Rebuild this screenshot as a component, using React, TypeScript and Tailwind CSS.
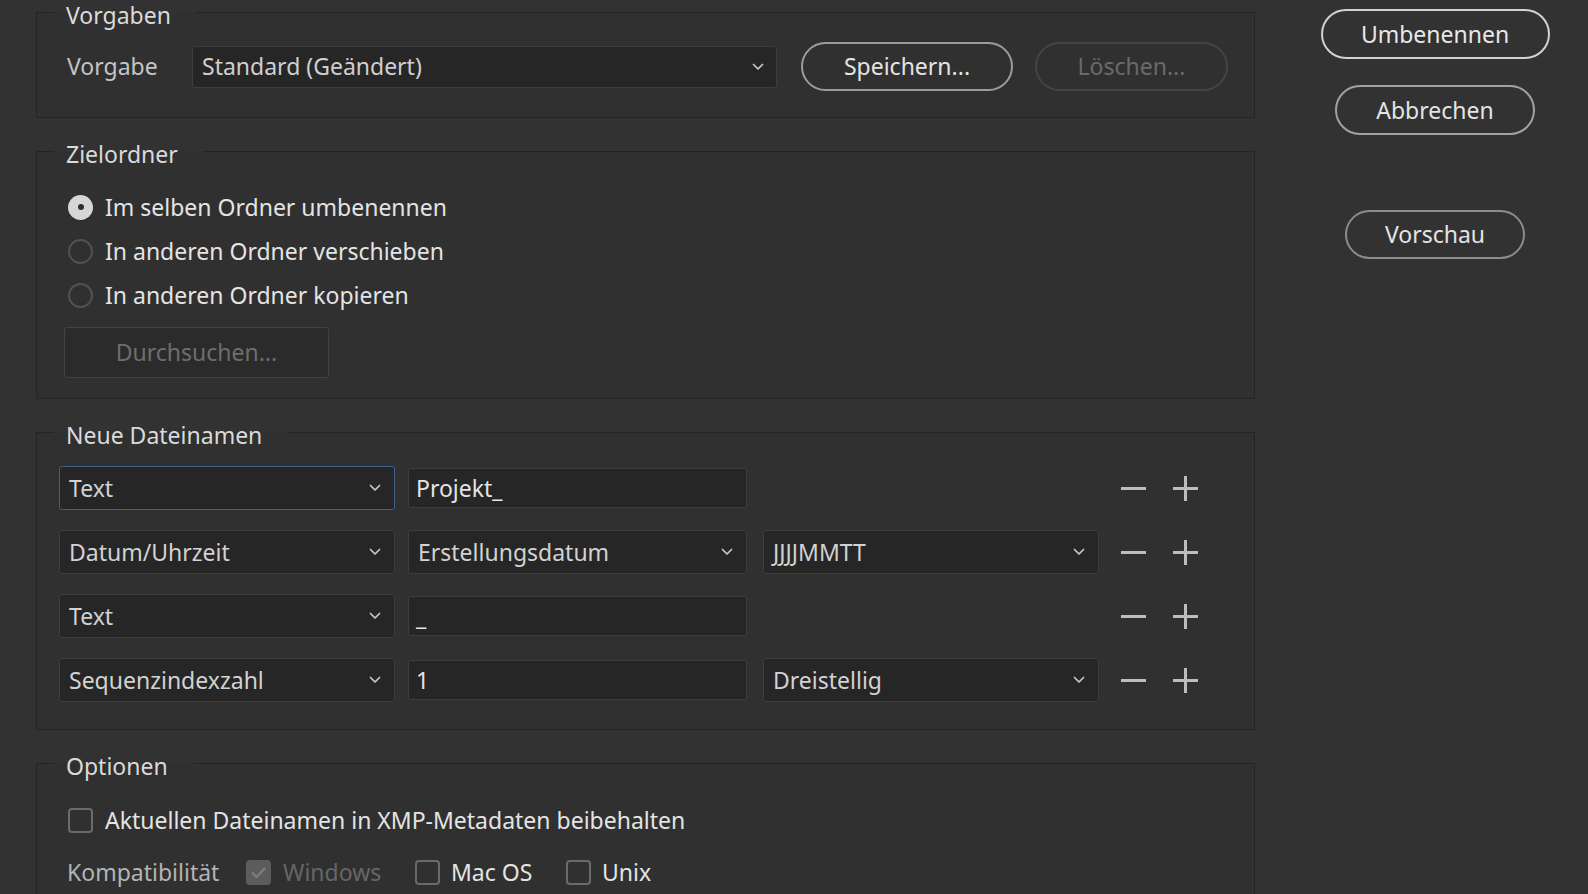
import React from "react";

const FONT = "font-['Noto_Sans',sans-serif]";

function Chevron() {
  return (
    <svg width="12" height="8" viewBox="0 0 12 8" className="shrink-0">
      <path d="M1.5 1.5 L6 6 L10.5 1.5" fill="none" stroke="#c9c9c9" strokeWidth="1.7" strokeLinecap="round" strokeLinejoin="round" />
    </svg>
  );
}

function Select({ text, w, focused }: { text: string; w: string; focused?: boolean }) {
  return (
    <div
      className={`${w} h-[44px] flex items-center justify-between pl-[9px] pr-[13px] rounded-[3px] bg-[#262626] border ${
        focused ? "border-[#3f5f8c]" : "border-[#3d3d3d]"
      }`}
    >
      <span className="text-[23px] text-[#d2d2d2] leading-none">{text}</span>
      <Chevron />
    </div>
  );
}

function Input({ text }: { text: string }) {
  return (
    <div className="w-[339px] h-[40px] flex items-center pl-[7px] rounded-[2px] bg-[#262626] border border-[#3d3d3d]">
      <span className="text-[23px] text-[#e4e4e4] leading-none">{text}</span>
    </div>
  );
}

function Minus() {
  return (
    <svg width="25" height="25" viewBox="0 0 25 25">
      <rect x="0" y="11" width="25" height="3" fill="#bdbdbd" />
    </svg>
  );
}

function Plus() {
  return (
    <svg width="25" height="25" viewBox="0 0 25 25">
      <rect x="0" y="11" width="25" height="3" fill="#bdbdbd" />
      <rect x="11" y="0" width="3" height="25" fill="#bdbdbd" />
    </svg>
  );
}

function Radio({ checked }: { checked?: boolean }) {
  if (checked) {
    return (
      <div className="w-[25px] h-[25px] rounded-full bg-[#d6d6d6] flex items-center justify-center shrink-0">
        <div className="w-[6px] h-[6px] rounded-full bg-[#2e2e2e]" />
      </div>
    );
  }
  return <div className="w-[25px] h-[25px] rounded-full border-2 border-[#525252] shrink-0" />;
}

function Checkbox({ checked, disabled }: { checked?: boolean; disabled?: boolean }) {
  if (checked && disabled) {
    return (
      <div className="w-[25px] h-[25px] rounded-[4px] bg-[#5c5c5c] flex items-center justify-center shrink-0">
        <svg width="17" height="13" viewBox="0 0 17 13">
          <path d="M2 6.5 L6.5 11 L15 2" fill="none" stroke="#7e7e7e" strokeWidth="2.2" />
        </svg>
      </div>
    );
  }
  return <div className="w-[25px] h-[25px] rounded-[4px] border-2 border-[#6a6a6a] shrink-0" />;
}

function Group({
  legend,
  children,
  inner,
}: {
  legend: string;
  children: React.ReactNode;
  inner?: string;
}) {
  return (
    <fieldset className="w-[1219px] border border-[#242424] bg-[#303030]">
      <legend className="ml-[17px] pl-[12px] pr-[26px] text-[23px] leading-[24px] text-[#dadada]">
        <span className="relative top-[3px]">{legend}</span>
      </legend>
      <div className={inner}>{children}</div>
    </fieldset>
  );
}

export default function App() {
  return (
    <div className={`${FONT} w-[1588px] h-[894px] overflow-hidden bg-[#323232] flex`}>
      <div className="w-[1255px] pl-[36px] flex flex-col gap-[21px]">
        <Group legend="Vorgaben" inner="pt-[18px] pb-[26px]">
          <div className="h-[49px] flex items-center pl-[30px]">
            <span className="w-[125px] text-[23px] text-[#c4c4c4]">Vorgabe</span>
            <div className="w-[585px] h-[42px] flex items-center justify-between pl-[9px] pr-[12px] rounded-[3px] bg-[#262626] border border-[#3d3d3d]">
              <span className="text-[23px] text-[#cfcfcf] leading-none">Standard (Geändert)</span>
              <Chevron />
            </div>
            <button className="ml-[24px] w-[212px] h-[49px] rounded-full border-2 border-[#9c9c9c] text-[23px] text-[#e4e4e4]">
              Speichern...
            </button>
            <button className="ml-[22px] w-[193px] h-[49px] rounded-full border-2 border-[#444444] text-[23px] text-[#6a6a6a]">
              Löschen...
            </button>
          </div>
        </Group>

        <Group legend="Zielordner" inner="pt-[22px] pb-[20px] pl-[27px]">
          <div className="flex flex-col pl-[4px]">
            {[
              ["Im selben Ordner umbenennen", true],
              ["In anderen Ordner verschieben", false],
              ["In anderen Ordner kopieren", false],
            ].map(([t, c]) => (
              <div key={t as string} className="h-[44px] flex items-center gap-[12px]">
                <Radio checked={c as boolean} />
                <span className="text-[23px] text-[#e4e4e4]">{t as string}</span>
              </div>
            ))}
          </div>
          <button className="mt-[10px] w-[265px] h-[51px] rounded-[3px] bg-[#2b2b2b] border border-[#424242] text-[23px] text-[#6e6e6e]">
            Durchsuchen...
          </button>
        </Group>

        <Group legend="Neue Dateinamen" inner="pt-[22px] pb-[27px] pl-[22px]">
          <div className="flex flex-col gap-[20px]">
            <div className="h-[44px] flex items-center">
              <Select text="Text" w="w-[336px]" focused />
              <div className="ml-[13px]">
                <Input text="Projekt_" />
              </div>
              <div className="ml-[16px] w-[336px]" />
              <div className="ml-[22px] flex items-center gap-[27px]">
                <Minus />
                <Plus />
              </div>
            </div>
            <div className="h-[44px] flex items-center">
              <Select text="Datum/Uhrzeit" w="w-[336px]" />
              <div className="ml-[13px]">
                <Select text="Erstellungsdatum" w="w-[339px]" />
              </div>
              <div className="ml-[16px]">
                <Select text="JJJJMMTT" w="w-[336px]" />
              </div>
              <div className="ml-[22px] flex items-center gap-[27px]">
                <Minus />
                <Plus />
              </div>
            </div>
            <div className="h-[44px] flex items-center">
              <Select text="Text" w="w-[336px]" />
              <div className="ml-[13px]">
                <Input text="_" />
              </div>
              <div className="ml-[16px] w-[336px]" />
              <div className="ml-[22px] flex items-center gap-[27px]">
                <Minus />
                <Plus />
              </div>
            </div>
            <div className="h-[44px] flex items-center">
              <Select text="Sequenzindexzahl" w="w-[336px]" />
              <div className="ml-[13px]">
                <Input text="1" />
              </div>
              <div className="ml-[16px]">
                <Select text="Dreistellig" w="w-[336px]" />
              </div>
              <div className="ml-[22px] flex items-center gap-[27px]">
                <Minus />
                <Plus />
              </div>
            </div>
          </div>
        </Group>

        <Group legend="Optionen" inner="pt-[23px] pb-[60px] pl-[30px]">
          <div className="flex flex-col gap-[8px]">
            <div className="h-[44px] flex items-center gap-[12px] pl-[1px]">
              <Checkbox />
              <span className="text-[23px] text-[#e4e4e4]">Aktuellen Dateinamen in XMP-Metadaten beibehalten</span>
            </div>
            <div className="h-[44px] flex items-center">
              <span className="w-[179px] text-[23px] text-[#b4b4b4]">Kompatibilität</span>
              <div className="w-[169px] flex items-center gap-[12px]">
                <Checkbox checked disabled />
                <span className="text-[23px] text-[#666666]">Windows</span>
              </div>
              <div className="w-[151px] flex items-center gap-[11px]">
                <Checkbox />
                <span className="text-[23px] text-[#e4e4e4]">Mac OS</span>
              </div>
              <div className="flex items-center gap-[11px]">
                <Checkbox />
                <span className="text-[23px] text-[#e4e4e4]">Unix</span>
              </div>
            </div>
          </div>
        </Group>
      </div>

      <div className="w-[333px] pl-[27px] pt-[9px] flex flex-col items-center">
        <button className="w-[229px] h-[50px] rounded-full border-2 border-[#d2d2d2] text-[23px] text-[#e8e8e8]">
          Umbenennen
        </button>
        <button className="mt-[26px] w-[200px] h-[50px] rounded-full border-2 border-[#a2a2a2] text-[23px] text-[#e4e4e4]">
          Abbrechen
        </button>
        <button className="mt-[75px] w-[180px] h-[49px] rounded-full border-2 border-[#8c8c8c] text-[23px] text-[#e4e4e4]">
          Vorschau
        </button>
      </div>
    </div>
  );
}
